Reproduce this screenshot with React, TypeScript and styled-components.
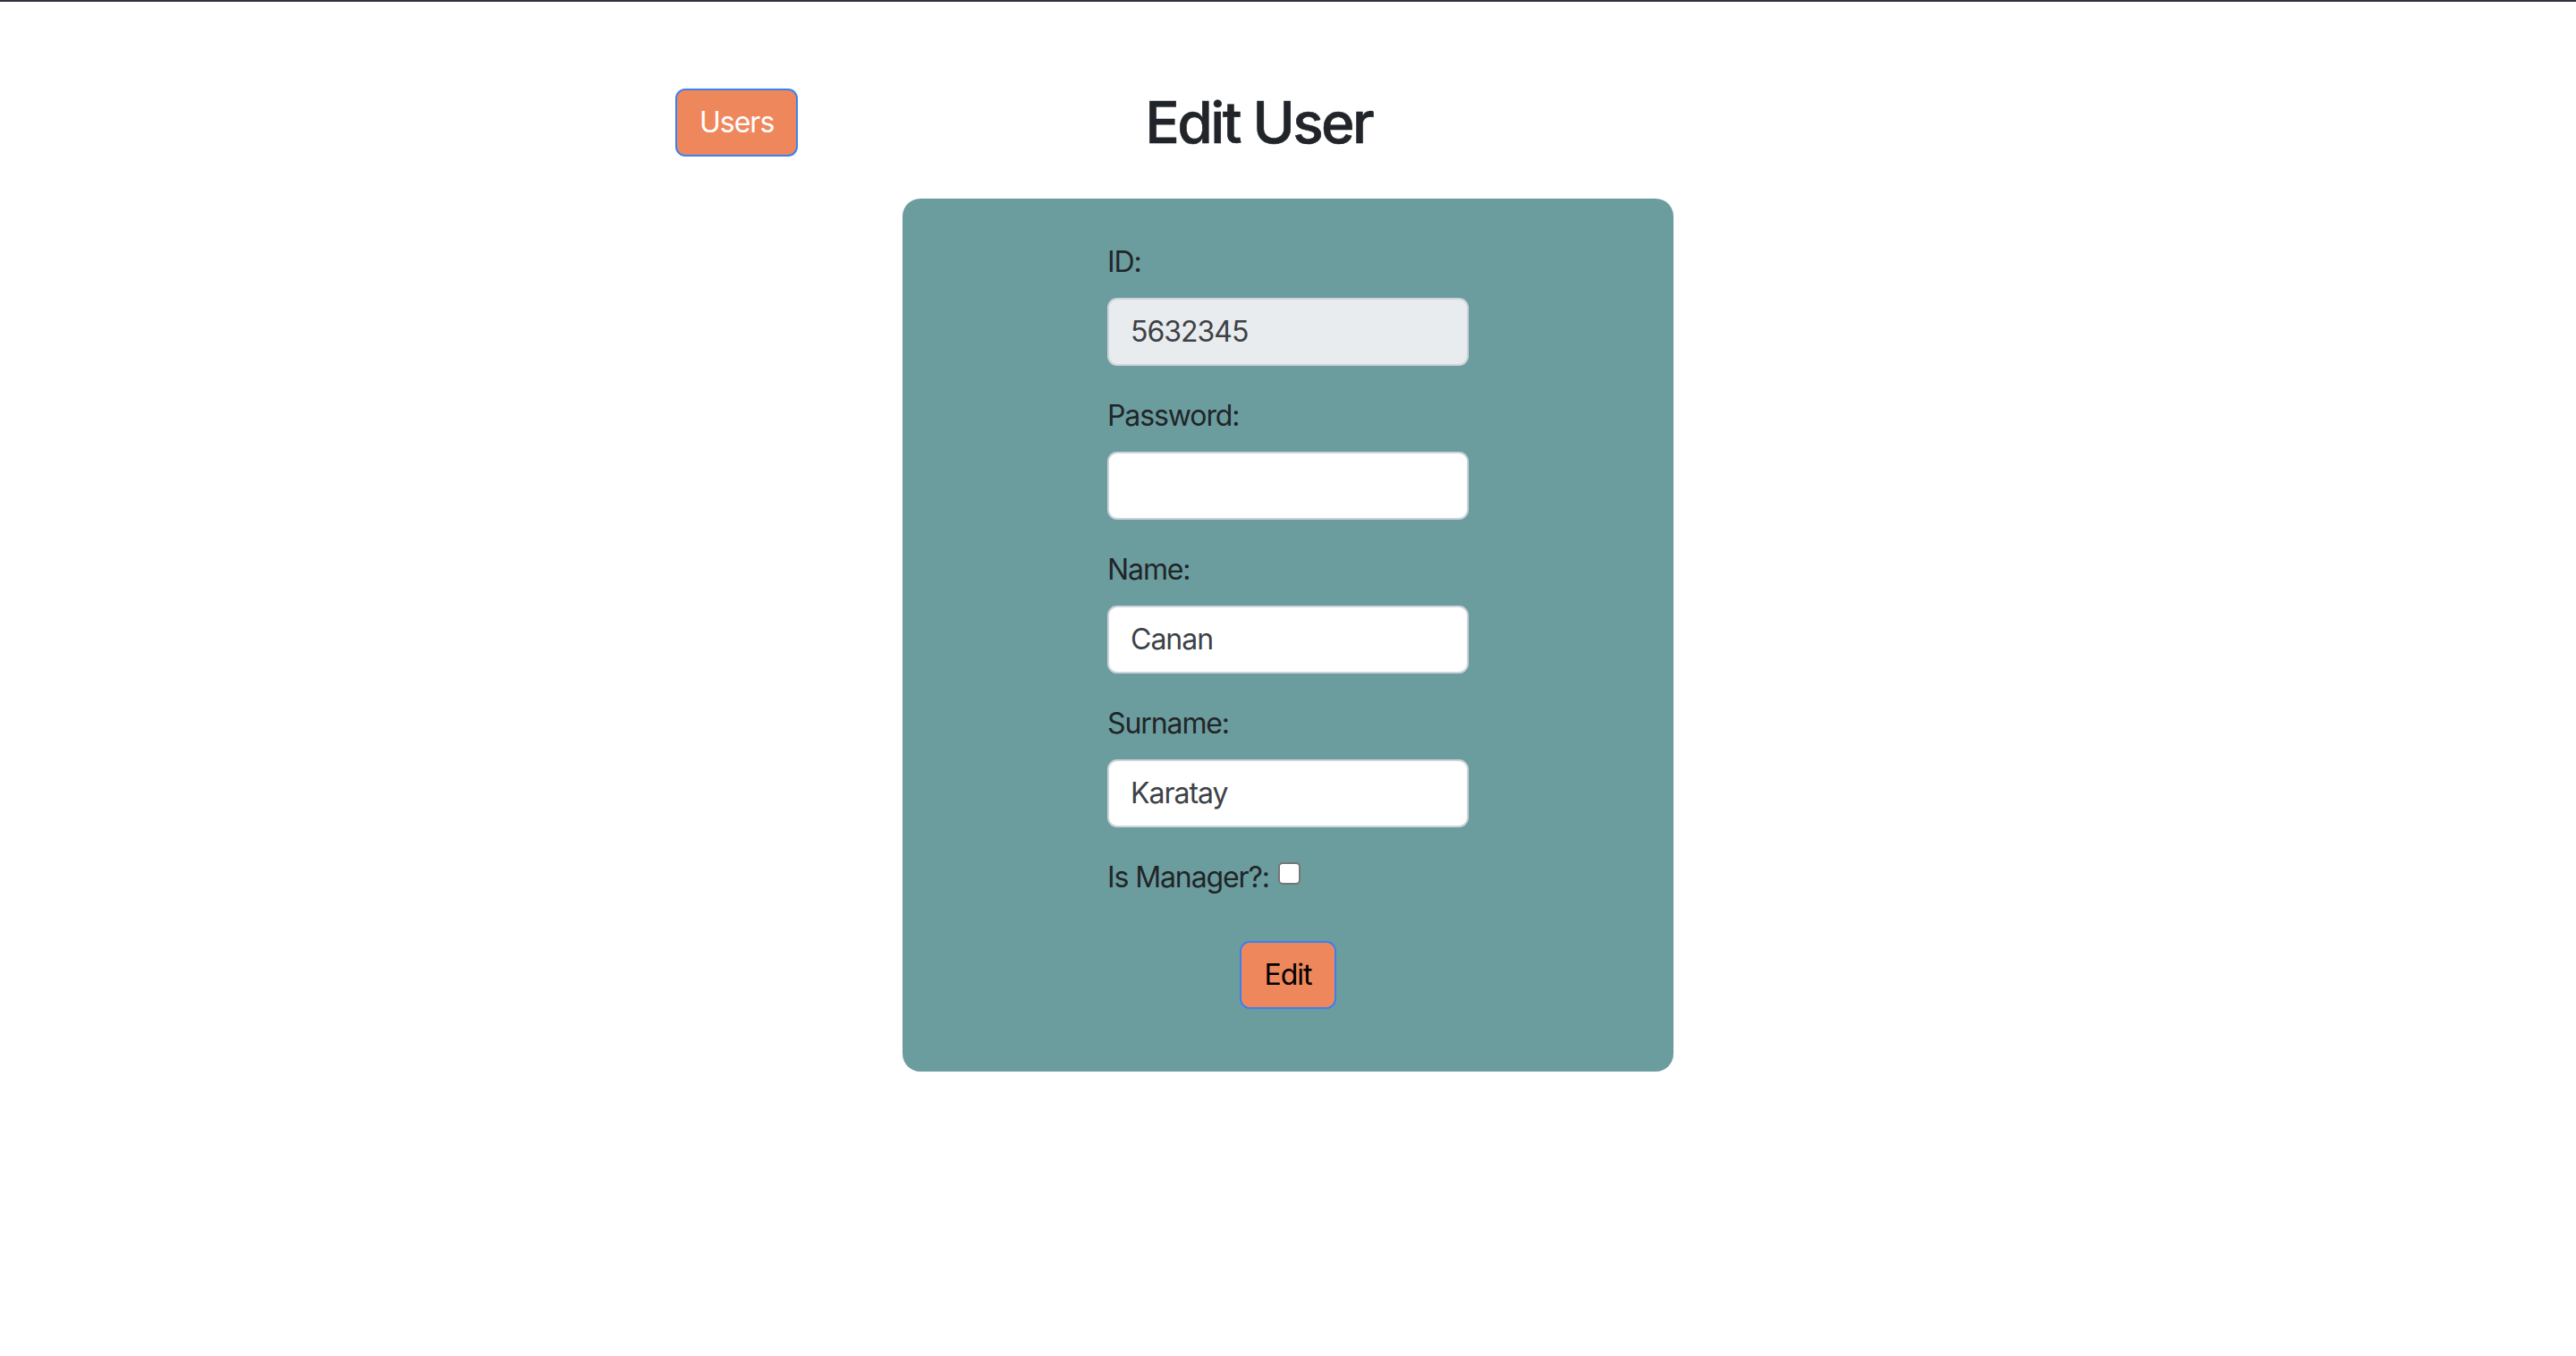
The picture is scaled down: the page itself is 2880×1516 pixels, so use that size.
import React from "react";
import styled, { createGlobalStyle } from "styled-components";

const GlobalStyle = createGlobalStyle`
  html, body {
    margin: 0;
    padding: 0;
    background: #ffffff;
  }
  body {
    font-family: Inter, "Noto Sans", "Liberation Sans", sans-serif;
    color: #212529;
  }
  * { box-sizing: border-box; }
`;

const TopBar = styled.div`
  height: 2px;
  background: #30333f;
`;

const Header = styled.header`
  width: 1370px;
  margin: 97px auto 0;
  display: flex;
  align-items: center;
  gap: 388px;
`;

const Title = styled.h2`
  margin: 0;
  font-size: 64px;
  font-weight: 500;
  line-height: 1.2;
  color: #212529;
  letter-spacing: -2.6px;
  -webkit-text-stroke: 0.6px #212529;
`;

const Button = styled.button<{ $dark?: boolean }>`
  height: 76px;
  padding: 0 25px;
  font-family: inherit;
  font-size: 32px;
  line-height: 48px;
  letter-spacing: -1px;
  color: ${(p) => (p.$dark ? "#000000" : "#ffffff")};
  background: #ef875c;
  border: 2px solid #3b80f3;
  border-radius: 11px;
  cursor: pointer;
`;

const Card = styled.section`
  width: 862px;
  margin: 46px auto 0;
  padding: 47px 0 70px;
  background: #6c9d9e;
  border-radius: 20px;
  display: flex;
  justify-content: center;
`;

const Form = styled.form`
  width: 404px;
  display: flex;
  flex-direction: column;
`;

const Field = styled.div`
  margin-bottom: 32px;
`;

const Label = styled.label`
  display: block;
  font-size: 32px;
  line-height: 48px;
  letter-spacing: -1.1px;
  margin-bottom: 16px;
  color: #212529;
`;

const Input = styled.input<{ $readonly?: boolean }>`
  display: block;
  width: 100%;
  height: 76px;
  padding: 0 24px;
  font-family: inherit;
  font-size: 32px;
  letter-spacing: -1px;
  color: #3d4247;
  background: ${(p) => (p.$readonly ? "#e9ecef" : "#ffffff")};
  border: 2px solid #ced4da;
  border-radius: 11px;
  outline: none;
`;

const CheckRow = styled.div`
  font-size: 32px;
  line-height: 48px;
  letter-spacing: -1.1px;
  margin-bottom: 47px;
  display: flex;
  align-items: center;
  gap: 10px;
`;

const CheckLabel = styled.span`
  color: #212529;
`;

const Check = styled.input`
  appearance: none;
  width: 25px;
  height: 25px;
  margin: 0;
  margin-top: -8px;
  background: #ffffff;
  border: 2px solid #767676;
  border-radius: 5px;
`;

const Actions = styled.div`
  display: flex;
  justify-content: center;
`;

export default function App() {
  return (
    <>
      <GlobalStyle />
      <TopBar />
      <Header>
        <Button type="button">Users</Button>
        <Title>Edit User</Title>
      </Header>
      <Card>
        <Form onSubmit={(e) => e.preventDefault()}>
          <Field>
            <Label>ID:</Label>
            <Input $readonly readOnly defaultValue="5632345" />
          </Field>
          <Field>
            <Label>Password:</Label>
            <Input type="password" defaultValue="" />
          </Field>
          <Field>
            <Label>Name:</Label>
            <Input defaultValue="Canan" />
          </Field>
          <Field>
            <Label>Surname:</Label>
            <Input defaultValue="Karatay" />
          </Field>
          <CheckRow>
            <CheckLabel>Is Manager?:</CheckLabel>
            <Check type="checkbox" />
          </CheckRow>
          <Actions>
            <Button type="submit" $dark>
              Edit
            </Button>
          </Actions>
        </Form>
      </Card>
    </>
  );
}
